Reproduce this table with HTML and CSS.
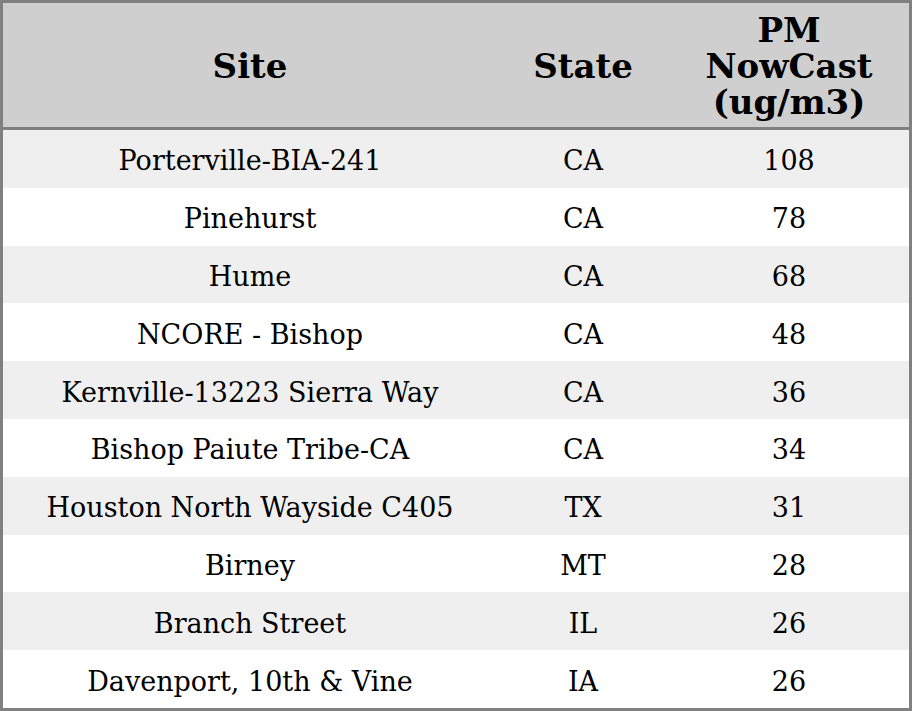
FILE: index.html
```html
<!DOCTYPE html>
<html>
<head>
<meta charset="utf-8">
<link rel="stylesheet" href="styles.css">
</head>
<body>
<table class="aq-table">
  <thead>
    <tr>
      <th class="col-site">Site</th>
      <th class="col-state">State</th>
      <th class="col-pm">PM<br>NowCast<br>(ug/m3)</th>
    </tr>
  </thead>
  <tbody>
    <tr><td>Porterville-BIA-241</td><td>CA</td><td>108</td></tr>
    <tr><td>Pinehurst</td><td>CA</td><td>78</td></tr>
    <tr><td>Hume</td><td>CA</td><td>68</td></tr>
    <tr><td>NCORE - Bishop</td><td>CA</td><td>48</td></tr>
    <tr><td>Kernville-13223 Sierra Way</td><td>CA</td><td>36</td></tr>
    <tr><td>Bishop Paiute Tribe-CA</td><td>CA</td><td>34</td></tr>
    <tr><td>Houston North Wayside C405</td><td>TX</td><td>31</td></tr>
    <tr><td>Birney</td><td>MT</td><td>28</td></tr>
    <tr><td>Branch Street</td><td>IL</td><td>26</td></tr>
    <tr><td>Davenport, 10th &amp; Vine</td><td>IA</td><td>26</td></tr>
  </tbody>
</table>
</body>
</html>
```

FILE: styles.css
```css
html, body {
  margin: 0;
  padding: 0;
  background: #ffffff;
}

.aq-table {
  width: 912px;
  border-collapse: separate;
  border-spacing: 0;
  border: 3px solid #808080;
  font-family: "DejaVu Serif", serif;
  color: #000000;
}

.aq-table th {
  background: #cfcfcf;
  font-weight: bold;
  font-size: 34px;
  line-height: 36px;
  height: 123px;
  padding: 1px 0 0 0;
  text-align: center;
  vertical-align: middle;
  border-bottom: 3px solid #808080;
}

.aq-table .col-site { width: 494px; }
.aq-table .col-state { width: 172px; }
.aq-table .col-pm { width: 240px; }

.aq-table td {
  font-size: 27px;
  height: 53.8px;
  padding: 4px 0 0 0;
  text-align: center;
  vertical-align: middle;
}

.aq-table tbody tr:nth-child(odd) td {
  background: #efefef;
}
```
